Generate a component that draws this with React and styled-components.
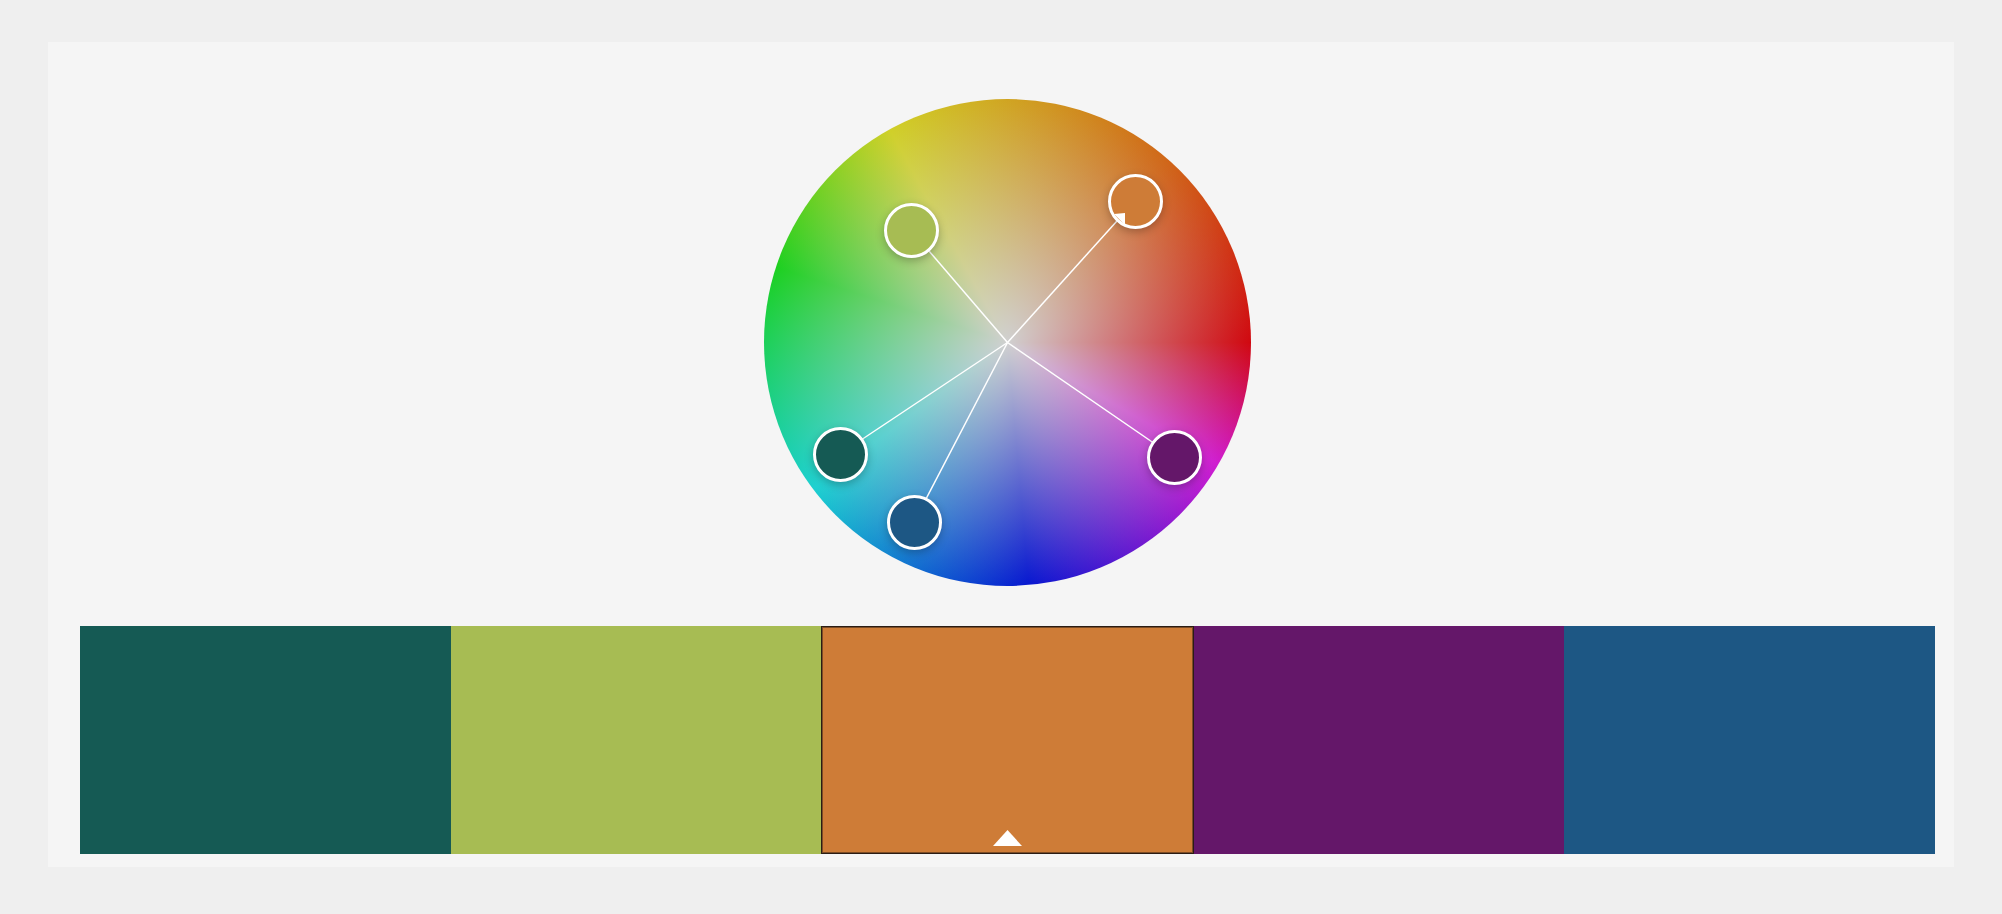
import React from 'react';
import styled, { createGlobalStyle } from 'styled-components';

const GlobalStyle = createGlobalStyle`
  * { box-sizing: border-box; }
  body { margin: 0; background: #efefef; font-family: "Liberation Sans", Arial, sans-serif; }
`;

const WHEEL_SIZE = 487;
const CENTER = WHEEL_SIZE / 2;

const COLORS = [
  { name: 'Teal', hex: '#155a54', x: 76, y: 355 },
  { name: 'Lime', hex: '#a7bc53', x: 147, y: 131 },
  { name: 'Orange', hex: '#ce7c37', x: 371, y: 102, base: true },
  { name: 'Purple', hex: '#641769', x: 410, y: 358 },
  { name: 'Blue', hex: '#1d5784', x: 150, y: 423 },
];

const Page = styled.div`
  min-height: 100vh;
  padding: 42px 48px;
`;

const Panel = styled.main`
  display: flex;
  flex-direction: column;
  align-items: center;
  gap: 40px;
  padding: 57px 19px 13px 32px;
  background: #f5f5f5;
`;

const Wheel = styled.div`
  position: relative;
  width: ${WHEEL_SIZE}px;
  height: ${WHEEL_SIZE}px;
  border-radius: 50%;
  background:
    radial-gradient(closest-side, rgb(208, 208, 208), rgba(208, 208, 208, 0)),
    conic-gradient(
      from 90deg,
      rgb(208, 8, 16),
      rgb(208, 28, 208) 30deg,
      rgb(8, 24, 208) 85deg,
      rgb(28, 208, 208) 143deg,
      rgb(28, 208, 32) 198deg,
      rgb(208, 208, 40) 241deg,
      rgb(208, 104, 24) 310deg,
      rgb(208, 8, 16) 360deg
    );
`;

const Spokes = styled.svg`
  display: block;
  stroke: #fff;
  stroke-width: 1.5;
`;

const Handle = styled.button`
  position: absolute;
  width: 55px;
  height: 55px;
  margin: -27px 0 0 -27px;
  padding: 0;
  border: 3px solid #fff;
  border-radius: 50%;
  background: ${({ $color }) => $color};
  box-shadow: 0 3px 8px rgba(0, 0, 0, 0.25);
  cursor: grab;
`;

const BaseMark = styled.svg`
  position: absolute;
  left: 2px;
  bottom: 1px;
  width: 12px;
  height: 12px;
  fill: #fff;
`;

const Swatches = styled.div`
  display: flex;
  align-self: stretch;
  height: 228px;
`;

const Swatch = styled.button`
  flex: 1;
  display: flex;
  align-items: flex-end;
  justify-content: center;
  padding: 0 0 7px;
  border: ${({ $active }) => ($active ? '1px solid #2a1c14' : '0')};
  background: ${({ $color }) => $color};
  box-shadow: ${({ $active }) => ($active ? 'inset 0 0 0 1px rgba(42, 28, 20, 0.5)' : 'none')};
  cursor: pointer;
`;

const Arrow = styled.svg`
  display: block;
  width: 29px;
  height: 16px;
  fill: #fff;
`;

export default function App() {
  return (
    <Page>
      <GlobalStyle />
      <Panel>
        <Wheel>
          <Spokes width={WHEEL_SIZE} height={WHEEL_SIZE} aria-hidden="true">
            {COLORS.map((c) => (
              <line key={c.name} x1={CENTER} y1={CENTER} x2={c.x} y2={c.y} />
            ))}
          </Spokes>
          {COLORS.map((c) => (
            <Handle key={c.name} type="button" aria-label={c.name} $color={c.hex} style={{ left: c.x, top: c.y }}>
              {c.base && (
                <BaseMark viewBox="0 0 12 12" aria-hidden="true">
                  <path d="M1 1 12 0V12Z" />
                </BaseMark>
              )}
            </Handle>
          ))}
        </Wheel>
        <Swatches>
          {COLORS.map((c) => (
            <Swatch key={c.name} type="button" aria-label={c.name} aria-pressed={Boolean(c.base)} $color={c.hex} $active={c.base}>
              {c.base && (
                <Arrow viewBox="0 0 29 16" aria-hidden="true">
                  <path d="M14.500 0 29 16H0Z" />
                </Arrow>
              )}
            </Swatch>
          ))}
        </Swatches>
      </Panel>
    </Page>
  );
}
